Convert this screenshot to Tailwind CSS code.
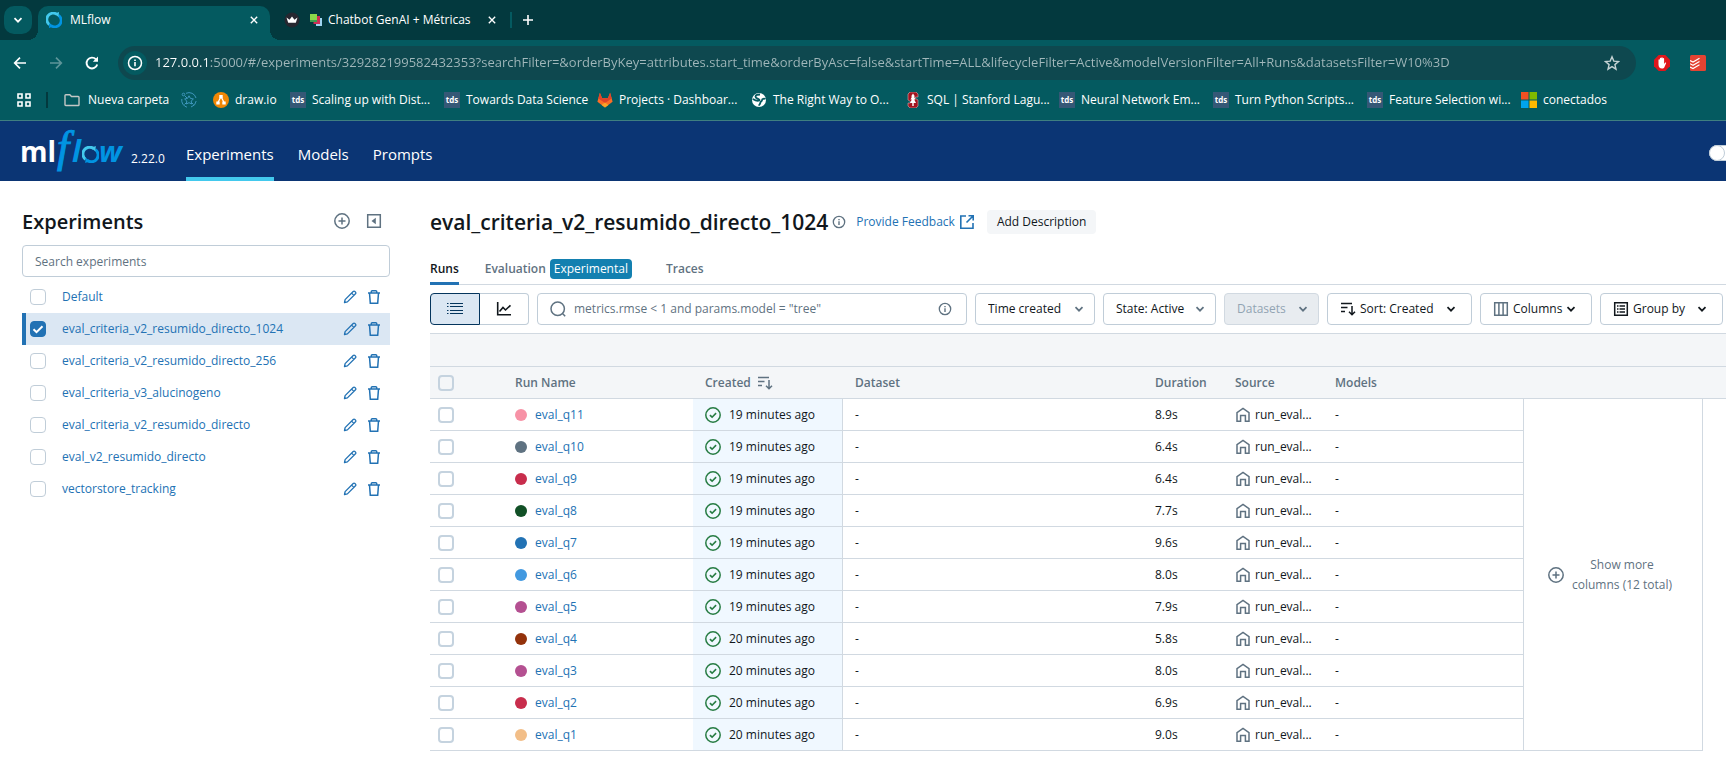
<!DOCTYPE html>
<html lang="es">
<head>
<meta charset="utf-8">
<title>MLflow</title>
<script src="https://cdn.jsdelivr.net/npm/@tailwindcss/browser@4"></script>
</head>
<body class="bg-white font-['Open_Sans','Noto_Sans',sans-serif] text-xs text-[#11171c] overflow-x-hidden">

<!-- shared icons -->
<svg class="hidden" aria-hidden="true">
  <symbol id="chev" viewBox="0 0 16 16"><path d="M4.500 6.200 8 9.700l3.500-3.500" fill="none" stroke="currentColor" stroke-width="1.700"/></symbol>
  <symbol id="x" viewBox="0 0 10 10"><path d="M1 1l8 8M9 1L1 9" fill="none" stroke="currentColor" stroke-width="1.700"/></symbol>
  <symbol id="info" viewBox="0 0 16 16"><circle cx="8" cy="8" r="6.500" fill="none" stroke="currentColor" stroke-width="1.500"/><path d="M8 7v4.300M8 4.500v1.600" stroke="currentColor" stroke-width="1.600"/></symbol>
  <symbol id="plusc" viewBox="0 0 16 16"><circle cx="8" cy="8" r="7.200" fill="none" stroke="currentColor" stroke-width="1.500"/><path d="M8 4.500v7M4.500 8h7" stroke="currentColor" stroke-width="1.500"/></symbol>
  <symbol id="pencil" viewBox="0 0 16 16"><path d="M2.500 13.500l.6-2.900 8.100-8.100a1.200 1.200 0 0 1 1.700 0l.6.600a1.200 1.200 0 0 1 0 1.700l-8.100 8.100zM9.600 4.100l2.300 2.300" fill="none" stroke="currentColor" stroke-width="1.300" stroke-linejoin="round"/></symbol>
  <symbol id="trash" viewBox="0 0 16 16"><path d="M2 4h12M5.300 4V2.600c0-.5.400-.9.900-.9h3.600c.5 0 .9.400.9.900V4M3.500 4l.8 10.300h7.400L12.500 4" fill="none" stroke="currentColor" stroke-width="1.500"/></symbol>
  <symbol id="sort" viewBox="0 0 16 16"><path d="M1 2.500h11M1 6.500h6.500M1 10.500h4M12 5v8.500M9 10.800l3 3 3-3" fill="none" stroke="currentColor" stroke-width="1.500"/></symbol>
  <symbol id="okc" viewBox="0 0 16 16"><circle cx="8" cy="8" r="7.200" fill="none" stroke="currentColor" stroke-width="1.500"/><path d="M4.900 8.100l2.200 2.100 4-4.100" fill="none" stroke="currentColor" stroke-width="1.600"/></symbol>
  <symbol id="home" viewBox="0 0 16 16"><path d="M2 14.300V5.600L8 1.500l6 4.100v8.700h-3.600V8.500H5.600v5.800z" fill="none" stroke="currentColor" stroke-width="1.500"/></symbol>
  <symbol id="ring" viewBox="0 0 16 16"><path d="M12.600 3.400A6.300 6.300 0 0 1 5 13.600" fill="none" stroke="#0194e2" stroke-width="2.800"/><path d="M3.400 12.600A6.300 6.300 0 0 1 11 2.400" fill="none" stroke="#43c9ed" stroke-width="2.800"/><path d="M3 16l.4-5 4.400 3.200z" fill="#0194e2"/><path d="M13 0l-.4 5-4.400-3.200z" fill="#43c9ed"/></symbol>
  <symbol id="tds" viewBox="0 0 16 16"><rect width="16" height="16" fill="#355876"/><text x="8" y="10.500" text-anchor="middle" font-family="Open Sans" font-size="8" font-weight="700" fill="#fff">tds</text></symbol>
</svg>

<!-- browser tab strip -->
<header>
  <div class="flex h-10 items-start bg-[#03393e] pl-1 text-white">
    <button aria-label="Buscar pestañas" class="mt-1.5 flex size-7 items-center justify-center rounded-[10px] bg-[#045a60]"><svg class="size-4"><use href="#chev"/></svg></button>
    <div class="relative ml-1.5 mt-1.5 flex h-[34px] w-[232px] items-center rounded-t-[10px] bg-[#045a60] pl-2 pr-3 pb-1.5">
      <span class="absolute -left-2.5 bottom-0 size-2.5 bg-[radial-gradient(circle_at_0_0,transparent_10px,#045a60_10px)]"></span>
      <span class="absolute -right-2.5 bottom-0 size-2.5 bg-[radial-gradient(circle_at_100%_0,transparent_10px,#045a60_10px)]"></span>
      <svg class="size-4"><use href="#ring"/></svg>
      <span class="ml-2 flex-1">MLflow</span>
      <button aria-label="Cerrar MLflow"><svg class="size-2"><use href="#x"/></svg></button>
    </div>
    <div class="flex h-10 items-center pl-3.5">
      <svg class="size-4" viewBox="0 0 16 16"><circle cx="8" cy="8" r="7.500" fill="#262730"/><path d="M2.500 5.500l3 2.300L8 4.500l2.500 3.300 3-2.300-1.700 5.300H4.200z" fill="#fff"/></svg>
      <svg class="ml-2.5 size-3" viewBox="0 0 12 12"><path d="M6 4h6v8H6z" fill="#9fd4f0"/><path d="M3.500 2H10v8H3.500z" fill="#cf2d55"/><path d="M0 0h7v8H0z" fill="#8bd84b"/><path d="M0 6h7v2H0z" fill="#3f9d4e"/></svg>
      <span class="ml-1.5 w-[160px]">Chatbot GenAI + Métricas</span>
      <button aria-label="Cerrar Chatbot"><svg class="size-2"><use href="#x"/></svg></button>
      <span class="ml-3.5 h-4 w-0.5 bg-[#045a60]"></span>
      <button aria-label="Nueva pestaña" class="ml-[11px]"><svg class="size-2.5" viewBox="0 0 10 10"><path d="M5 0v10M0 5h10" stroke="#fff" stroke-width="1.600"/></svg></button>
    </div>
  </div>

  <!-- address bar and bookmarks -->
  <div class="border-b border-[#3f7f80] bg-[#045a60] py-1.5 text-white">
    <div class="flex items-center pl-3">
      <button aria-label="Atrás"><svg class="size-4" viewBox="0 0 16 16"><path d="M14 8H3M8 2.700L2.700 8 8 13.300" fill="none" stroke="#fff" stroke-width="1.700"/></svg></button>
      <button aria-label="Adelante" class="ml-5 text-[#5e9599]"><svg class="size-4" viewBox="0 0 16 16"><path d="M2 8h11M8 2.700L13.300 8 8 13.300" fill="none" stroke="currentColor" stroke-width="1.700"/></svg></button>
      <button aria-label="Recargar" class="ml-5"><svg class="size-4" viewBox="0 0 16 16"><path d="M13.200 9.400A5.400 5.400 0 1 1 12 4.400" fill="none" stroke="#fff" stroke-width="1.900"/><path d="M14 1.500v5.200H8.800z" fill="#fff"/></svg></button>
      <div class="ml-[18px] flex h-[34px] flex-1 items-center rounded-full bg-[#0e484f] pl-[5px] pr-4">
        <button aria-label="Información del sitio" class="flex size-6 items-center justify-center rounded-full bg-[#045a60]"><svg class="size-4"><use href="#info"/></svg></button>
        <input aria-label="Dirección" class="ml-2 flex-1 bg-[linear-gradient(to_right,#fff_54px,#a2b8bb_54px)] bg-clip-text text-[13px] text-transparent outline-none" value="127.0.0.1:5000/#/experiments/329282199582432353?searchFilter=&amp;orderByKey=attributes.start_time&amp;orderByAsc=false&amp;startTime=ALL&amp;lifecycleFilter=Active&amp;modelVersionFilter=All+Runs&amp;datasetsFilter=W10%3D">
        <button aria-label="Añadir a marcadores"><svg class="size-4" viewBox="0 0 16 16"><path d="M8 1.800l1.800 4.300 4.700.4-3.600 3.100 1.100 4.600L8 11.700l-4 2.500 1.100-4.600-3.600-3.100 4.700-.4z" fill="none" stroke="#c5d3d4" stroke-width="1.400"/></svg></button>
      </div>
      <button aria-label="AdBlock" class="ml-[18px]"><svg class="size-4" viewBox="0 0 16 16"><path d="M4.700 0h6.600L16 4.700v6.600L11.300 16H4.700L0 11.300V4.700z" fill="#e0161b"/><path d="M4.500 9.500V5a.7.7 0 0 1 1.400 0V3.500a.7.7 0 0 1 1.400 0V3a.7.7 0 0 1 1.400 0v.700a.7.7 0 0 1 1.400 0V9l.9-1.300c.5-.6 1.400-.2 1.100.5L10.500 12c-.5 1-1.300 1.500-2.500 1.500-2.200 0-3.500-1.300-3.500-4z" fill="#fff"/></svg></button>
      <button aria-label="Todoist" class="ml-5 mr-5"><svg class="size-4" viewBox="0 0 16 16"><rect width="16" height="16" rx="1.500" fill="#e44332"/><path d="M0 5.500l3 1.500 6.500-3.700M0 8.700l3 1.500 6.500-3.700M0 12l3 1.500 6.500-3.700" fill="none" stroke="#fff" stroke-width="1.200"/></svg></button>
    </div>
    <nav aria-label="Marcadores" class="mt-1.5 flex h-7 items-center whitespace-nowrap pl-[17px]">
      <button aria-label="Aplicaciones"><svg class="size-3.5" viewBox="0 0 14 14"><path d="M1 1h4v4H1zM9 1h4v4H9zM1 9h4v4H1zM9 9h4v4H9z" fill="none" stroke="#fff" stroke-width="1.600"/></svg></button>
      <span class="ml-[15px] h-4 w-0.5 bg-[#03393e]"></span>
      <a href="#" class="ml-4 flex w-[117px] items-center gap-2"><svg class="size-4" viewBox="0 0 16 16"><path d="M1 3.500c0-.5.300-.8.800-.8h4l1.700 1.800h6.700c.5 0 .8.300.8.800v7.400c0 .5-.3.800-.8.800H1.800c-.5 0-.8-.3-.8-.8z" fill="none" stroke="#c4c7c5" stroke-width="1.400"/></svg>Nueva carpeta</a>
      <a href="#" aria-label="Marcador" class="w-8"><svg class="size-4" viewBox="0 0 16 16" fill="none" stroke="#3f97bd"><path d="M5 1.300A7.200 7.200 0 0 1 15 6M15.200 9A7.200 7.200 0 0 1 10 15M6 15.200A7.200 7.200 0 0 1 .8 7"/><circle cx="2.500" cy="2.500" r="1.300"/><path d="M8 3.800l1.400 2.600 3 .6-2.200 2 .4 3L8 10.700 5.400 12l.4-3-2.200-2 3-.6zM3.500 12.500l2-2M12.500 12.500l-2-2M4 4l2 2"/></svg></a>
      <a href="#" class="flex w-[77px] items-center gap-1.5"><svg class="size-4" viewBox="0 0 16 16"><circle cx="8" cy="8" r="8" fill="#f08705"/><path d="M8 4.500l-3 6M8 4.500l3 6" stroke="#fff" stroke-width="1.300"/><path d="M6.300 3h3.400v3.200H6.300zM3.300 9.500h3.400v3H3.300zM9.300 9.500h3.400v3H9.300z" fill="#fff"/></svg>draw.io</a>
      <a href="#" class="flex w-[154px] items-center gap-1.5"><svg class="size-4"><use href="#tds"/></svg>Scaling up with Dist...</a>
      <a href="#" class="flex w-[153px] items-center gap-1.5"><svg class="size-4"><use href="#tds"/></svg>Towards Data Science</a>
      <a href="#" class="flex w-[154px] items-center gap-1.5"><svg class="size-4" viewBox="0 0 16 16"><path d="M8 15.500L.4 9.700 2.900.8l2.200 5.400h5.800L13.100.8l2.500 8.900z" fill="#fc6d26"/><path d="M2.900.8l2.200 5.400h5.800L13.100.8l1.600 5.700L8 11 1.300 6.500z" fill="#e24329"/><path d="M8 15.500l-3.400-2.600L8 10.500l3.400 2.400z" fill="#fca326"/></svg>Projects · Dashboar...</a>
      <a href="#" class="flex w-[154px] items-center gap-1.5"><svg class="size-4" viewBox="0 0 16 16"><circle cx="8" cy="8" r="7" fill="#fff"/><path d="M9 2.500c-3 0-4.500 1-4.500 2.300S6 6.500 7.500 7s1 1.500 0 1.700-4-.7-5.700-1.700M14.500 7c-1.500-.8-3.500-.2-3.500 1.200 0 1-1.200 1-1.500 2S9 13 7.500 13.500" fill="none" stroke="#045a60" stroke-width="1.800"/></svg>The Right Way to O...</a>
      <a href="#" class="flex w-[154px] items-center gap-1.5"><svg class="size-4" viewBox="0 0 16 16"><path d="M5 0h6l2 2v3h-2.500v1.500L13 8v6l-2 2H5l-2-2v-3h2.500V9.500L3 8V2z" fill="#a31420" stroke="#d9a9ad" stroke-width=".6"/><path d="M8 1.500l2 3H9l1.500 3H9.200L11 11H8.700v3H7.300v-3H5l1.800-3.500H5.500l1.500-3H6z" fill="#fff"/></svg>SQL | Stanford Lagu...</a>
      <a href="#" class="flex w-[154px] items-center gap-1.5"><svg class="size-4"><use href="#tds"/></svg>Neural Network Em...</a>
      <a href="#" class="flex w-[154px] items-center gap-1.5"><svg class="size-4"><use href="#tds"/></svg>Turn Python Scripts...</a>
      <a href="#" class="flex w-[154px] items-center gap-1.5"><svg class="size-4"><use href="#tds"/></svg>Feature Selection wi...</a>
      <a href="#" class="flex items-center gap-1.5"><svg class="size-4" viewBox="0 0 16 16"><path d="M0 0h7.500v7.500H0z" fill="#f25022"/><path d="M8.500 0H16v7.500H8.500z" fill="#7fba00"/><path d="M0 8.500h7.500V16H0z" fill="#00a4ef"/><path d="M8.500 8.500H16V16H8.500z" fill="#ffb900"/></svg>conectados</a>
    </nav>
  </div>
</header>

<!-- MLflow navigation -->
<div class="flex h-[60px] items-stretch overflow-hidden bg-[#0b3574] text-white">
  <a href="#" aria-label="MLflow" class="ml-5 block"><svg class="h-[60px] w-[108px]" viewBox="0 0 108 60" font-family="Open Sans">
    <text x="0" y="41" font-size="28" font-weight="700" fill="#fff">ml</text>
    <text x="37" y="41" font-family="Liberation Serif" font-size="44" font-style="italic" fill="#0194e2" stroke="#0194e2" stroke-width="1">f</text>
    <text x="52" y="41" font-size="30" font-style="italic" font-weight="700" fill="#0194e2">l</text>
    <svg x="62" y="25" width="17" height="17"><use href="#ring"/></svg>
    <text x="79" y="41" font-size="29" font-style="italic" font-weight="700" fill="#0194e2">w</text>
  </svg></a>
  <span class="ml-[3px] mt-7 w-[33px] leading-5">2.22.0</span>
  <nav class="ml-[22px] flex gap-6 text-[15px]">
    <a href="#" class="border-b-4 border-[#43c9ed] pt-[21px] leading-6">Experiments</a>
    <a href="#" class="pt-[21px] leading-6">Models</a>
    <a href="#" class="pt-[21px] leading-6">Prompts</a>
  </nav>
  <label class="-mr-[11px] ml-auto mt-6 h-4 w-7 rounded-full border border-[#c0cdd8] bg-white"><input type="checkbox" class="sr-only" aria-label="Nueva interfaz"><span class="-ml-px -mt-px block size-4 rounded-full border border-[#c0cdd8] bg-white"></span></label>
</div>

<div class="flex">
  <!-- experiment list -->
  <aside class="w-[390px] shrink-0 pl-[22px] pt-6">
    <div class="flex h-8 items-center pr-2">
      <h2 class="flex-1 pt-0.5 text-[20px] font-semibold">Experiments</h2>
      <button aria-label="Create experiment" class="text-[#5f7281]"><svg class="size-4"><use href="#plusc"/></svg></button>
      <button aria-label="Collapse" class="ml-4 text-[#5f7281]"><svg class="size-4" viewBox="0 0 16 16"><path d="M1.700 1.700h12.600v12.600H1.700z" fill="none" stroke="currentColor" stroke-width="1.500"/><path d="M9.800 4.800v6.400L5.500 8z" fill="currentColor"/></svg></button>
    </div>
    <input type="text" aria-label="Search experiments" placeholder="Search experiments" class="mt-2 h-8 w-full rounded border border-[#c0cdd8] px-3 text-xs placeholder:text-[#5f7281] outline-none">
    <ul id="experiments" class="mt-1"></ul>
  </aside>

  <!-- runs of the selected experiment -->
  <main class="ml-10 min-w-0 flex-1 pt-[25px]">
    <div class="flex h-8 items-center">
      <h1 class="text-[21px] font-semibold">eval_criteria_v2_resumido_directo_1024</h1>
      <button aria-label="Info" class="ml-1 text-[#5f7281]"><svg class="size-3.5"><use href="#info"/></svg></button>
      <a href="#" class="ml-2.5 flex items-center gap-1 text-[#2272b4]">Provide Feedback<svg class="size-4" viewBox="0 0 16 16"><path d="M7 2H1.800v12.200H14V9M9.500 1.800h4.700v4.700M14 2L7.500 8.500" fill="none" stroke="currentColor" stroke-width="1.600"/></svg></a>
      <button class="ml-3 h-6 rounded bg-[#f4f6f8] px-2.5">Add Description</button>
    </div>
    <nav class="mt-[19px] flex h-[28px] items-stretch border-b border-[#d1d9e1] font-semibold text-[#5f7281]">
      <a href="#" class="-mb-px border-b-[3px] border-[#2272b4] leading-6 text-[#11171c]">Runs</a>
      <a href="#" class="ml-[26px] flex h-6 items-center gap-1">Evaluation <span class="rounded bg-[#1380b0] px-1 leading-5 text-white font-medium">Experimental</span></a>
      <a href="#" class="ml-[34px] leading-6">Traces</a>
    </nav>
    <div class="mt-2 flex h-8 gap-2 pr-[3px]">
      <div class="flex">
        <button aria-label="Table view" class="flex w-[50px] items-center justify-center rounded-l border border-[#04355d] bg-[#dbe7f3] text-[#04355d]"><svg class="size-4" viewBox="0 0 16 16"><path d="M3 2.500h13M3 5.500h13M3 9.500h13M3 12.500h13" stroke="currentColor" stroke-width="1.200"/><path d="M0 2.500h1.500M0 5.500h1.500M0 9.500h1.500M0 12.500h1.500" stroke="currentColor" stroke-width="1.200"/></svg></button>
        <button aria-label="Chart view" class="flex w-[49px] items-center justify-center rounded-r border border-l-0 border-[#c0cdd8]"><svg class="size-4" viewBox="0 0 16 16"><path d="M1.700 1v12.700H15M3.500 10.500l3.500-4 2.500 2.500 5-4.700" fill="none" stroke="currentColor" stroke-width="1.600"/></svg></button>
      </div>
      <div class="flex min-w-0 flex-1 items-center rounded border border-[#c0cdd8] px-3 text-[#5f7281]">
        <svg class="size-4" viewBox="0 0 16 16"><circle cx="7.700" cy="7.700" r="6.700" fill="none" stroke="currentColor" stroke-width="1.500"/><path d="M12.500 12.500l2.700 2.700" stroke="currentColor" stroke-width="1.500"/></svg>
        <input type="text" aria-label="Search runs" placeholder='metrics.rmse &lt; 1 and params.model = "tree"' class="ml-2 min-w-0 flex-1 placeholder:text-[#5f7281] outline-none">
        <svg class="mr-0.5 size-3.5"><use href="#info"/></svg>
      </div>
      <div class="relative w-[120px]"><select aria-label="Time" class="size-full appearance-none rounded border border-[#c0cdd8] pl-3"><option>Time created</option></select><svg class="pointer-events-none absolute right-2 top-2 size-4 text-[#5f7281]"><use href="#chev"/></svg></div>
      <div class="relative w-[113px]"><select aria-label="State" class="size-full appearance-none rounded border border-[#c0cdd8] pl-3"><option>State: Active</option></select><svg class="pointer-events-none absolute right-2 top-2 size-4 text-[#5f7281]"><use href="#chev"/></svg></div>
      <div class="relative w-[95px]"><select aria-label="Datasets" disabled class="size-full appearance-none rounded border border-[#d1d9e1] bg-[#e8ecf0] pl-3 text-[#92a4b3] opacity-100"><option>Datasets</option></select><svg class="pointer-events-none absolute right-2 top-2 size-4 text-[#5f7281]"><use href="#chev"/></svg></div>
      <button class="flex w-[145px] items-center rounded border border-[#c0cdd8] pl-3"><svg class="mr-1 size-4"><use href="#sort"/></svg>Sort: Created<svg class="ml-auto mr-3 size-4"><use href="#chev"/></svg></button>
      <button class="flex w-[112px] items-center rounded border border-[#c0cdd8] pl-3"><svg class="mr-1 size-4 text-[#5f7281]" viewBox="0 0 16 16"><path d="M1.700 1.700h12.600v12.600H1.700zM5.900 1.700v12.600M10.100 1.700v12.600" fill="none" stroke="currentColor" stroke-width="1.500"/></svg>Columns<svg class="ml-auto mr-3 size-4"><use href="#chev"/></svg></button>
      <button class="flex w-[123px] items-center rounded border border-[#c0cdd8] pl-3"><svg class="mr-1 size-4" viewBox="0 0 16 16"><path d="M1.700 1.700h12.600v12.600H1.700z" fill="none" stroke="currentColor" stroke-width="1.500"/><path d="M4 5h1.500M4 8h1.500M4 11h1.500M6.500 5H12M6.500 8H12M6.500 11H12" stroke="currentColor" stroke-width="1.400"/></svg>Group by<svg class="ml-auto mr-3 size-4"><use href="#chev"/></svg></button>
    </div>

    <div class="mt-2 h-[34px] border-y border-[#d1d9e1] bg-[#f4f6f8]"></div>
    <table class="w-full table-fixed border-separate border-spacing-0 text-left">
      <colgroup><col class="w-[73px]"><col class="w-[190px]"><col class="w-[150px]"><col class="w-[300px]"><col class="w-20"><col class="w-[100px]"><col class="w-[201px]"><col class="w-[179px]"><col></colgroup>
      <thead>
        <tr class="h-8 bg-[#f4f6f8] text-[#5f7281] [&>th]:border-b [&>th]:border-[#d1d9e1] [&>th]:py-0 [&>th]:pl-3 [&>th]:font-semibold">
          <th class="!pl-2"><input type="checkbox" aria-label="Select all runs" class="block size-4 appearance-none rounded-sm border-2 border-[#c5d3df]"></th>
          <th>Run Name</th>
          <th><span class="flex items-center gap-1.5">Created <svg class="size-4"><use href="#sort"/></svg></span></th>
          <th>Dataset</th><th>Duration</th><th>Source</th><th>Models</th><th></th><th></th>
        </tr>
      </thead>
      <tbody id="runs"></tbody>
    </table>
  </main>
</div>

<script>
const experiments = ['Default', 'eval_criteria_v2_resumido_directo_1024', 'eval_criteria_v2_resumido_directo_256', 'eval_criteria_v3_alucinogeno', 'eval_criteria_v2_resumido_directo', 'eval_v2_resumido_directo', 'vectorstore_tracking'];
document.getElementById('experiments').innerHTML = experiments.map((name, i) => `
  <li class="flex h-8 items-center border-l-4 pl-1 pr-2 text-[#2272b4] ${i === 1 ? 'border-[#2272b4] bg-[#dbe7f3]' : 'border-transparent'}">
    <span class="relative size-4"><input type="checkbox" aria-label="${name}" ${i === 1 ? 'checked' : ''} class="block size-4 appearance-none rounded border border-[#c0cdd8] bg-white checked:border-[#2272b4] checked:bg-[#2272b4]">${i === 1 ? '<svg class="pointer-events-none absolute inset-0 size-4" viewBox="0 0 16 16"><path d="M3.500 8.200l3 3 6-6" fill="none" stroke="#fff" stroke-width="2"/></svg>' : ''}</span>
    <a href="#" class="ml-4 flex-1">${name}</a>
    <button aria-label="Rename ${name}"><svg class="size-4"><use href="#pencil"/></svg></button>
    <button aria-label="Delete ${name}" class="ml-2"><svg class="size-4"><use href="#trash"/></svg></button>
  </li>`).join('');

const runs = [['eval_q11', '#f792a6', 19, '8.9s'], ['eval_q10', '#5f7281', 19, '6.4s'], ['eval_q9', '#c82d4c', 19, '6.4s'], ['eval_q8', '#115026', 19, '7.7s'], ['eval_q7', '#2272b4', 19, '9.6s'], ['eval_q6', '#4299e0', 19, '8.0s'], ['eval_q5', '#b45091', 19, '7.9s'], ['eval_q4', '#93320b', 20, '5.8s'], ['eval_q3', '#b45091', 20, '8.0s'], ['eval_q2', '#c82d4c', 20, '6.9s'], ['eval_q1', '#f2be88', 20, '9.0s']];
document.getElementById('runs').innerHTML = runs.map(([name, color, min, dur], i) => `
  <tr class="h-8 [&>td]:border-b [&>td]:border-[#d1d9e1] [&>td]:py-0 [&>td]:pl-3">
    <td class="!pl-2"><input type="checkbox" aria-label="Select ${name}" class="block size-4 appearance-none rounded-sm border-2 border-[#c5d3df]"></td>
    <td><span class="flex items-center gap-2"><i class="size-3 rounded-full" style="background:${color}"></i><a href="#" class="text-[#2272b4]">${name}</a></span></td>
    <td class="border-r bg-[#f0f8ff]"><span class="flex items-center gap-2"><svg class="size-4 text-[#277c43]"><use href="#okc"/></svg>${min} minutes ago</span></td>
    <td>-</td><td>${dur}</td>
    <td><span class="flex items-center gap-1"><svg class="size-4 text-[#5f7281]"><use href="#home"/></svg>run_eval...</span></td>
    <td class="border-r">-</td>
    ${i ? '' : `<td rowspan="11" class="border-r !pl-6"><button class="flex items-center gap-1 text-center leading-5 text-[#5f7281]"><svg class="size-4 shrink-0"><use href="#plusc"/></svg><span class="w-[108px]">Show more columns (12 total)</span></button></td>`}
  </tr>`).join('');
</script>
</body>
</html>
